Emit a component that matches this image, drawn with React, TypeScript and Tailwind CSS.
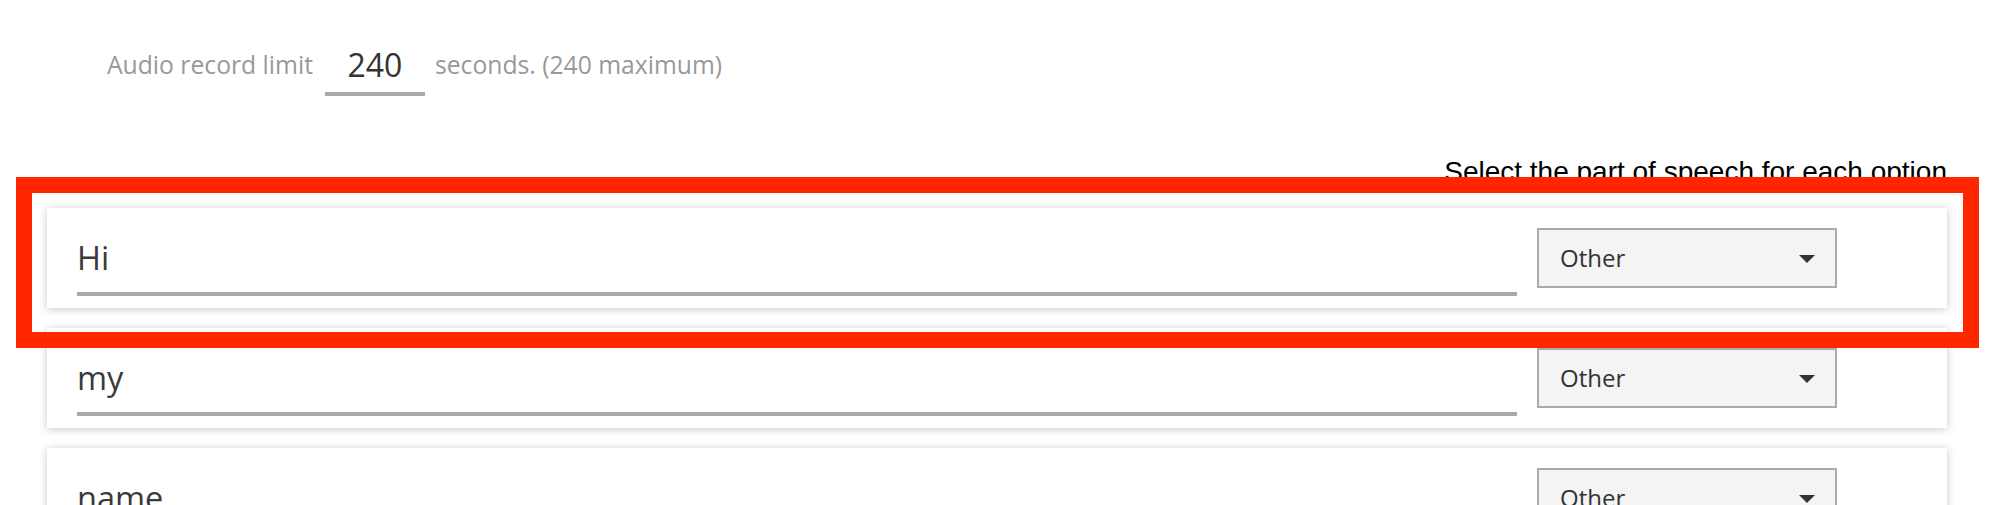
import React from "react";

const words = ["Hi", "my", "name"];

const PartOfSpeechRow = ({ word }: { word: string }) => {
    return (
        <div className="flex items-start h-[100px] bg-white pl-[30px] pr-[110px] pt-[20px] shadow-[0_1px_8px_rgba(0,0,0,0.22)]">
            {/* word input */}
            <div className="flex-1 mt-[8px]">
                <input
                    type="text"
                    defaultValue={word}
                    className="w-full h-[60px] pb-[13px] border-b-4 border-[#aaaaaa] bg-transparent text-[32.5px] text-[#3a3a3a] outline-none"
                />
            </div>

            {/* part of speech dropdown */}
            <div className="ml-[20px] w-[300px] h-[60px] flex items-center justify-between pl-[21px] pr-[20px] border-2 border-[#aaaaaa] bg-[#f4f4f4]">
                <span className="text-[24px] leading-[32px] text-[#333333]">Other</span>
                <svg width="16" height="8" viewBox="0 0 16 8" className="mt-[1px]">
                    <path d="M0 0 L16 0 L8 8 Z" fill="#333333" />
                </svg>
            </div>
        </div>
    );
};

export default function App() {
    return (
        <div className="relative w-[1990px] h-[505px] overflow-hidden bg-white font-['Open_Sans',sans-serif]">
            {/* Audio limit */}
            <div className="flex items-start pl-[107px] pt-[44px]">
                <span className="mt-[5px] text-[24.7px] leading-[32px] text-[#999999]">Audio record limit</span>
                <input
                    type="text"
                    defaultValue="240"
                    className="ml-[12px] w-[100px] h-[52px] pb-[8px] border-b-4 border-[#aaaaaa] bg-transparent text-center text-[32px] text-[#333333] outline-none"
                />
                <span className="ml-[10px] mt-[5px] text-[24.7px] leading-[32px] text-[#999999]">
                    seconds. (240 maximum)
                </span>
            </div>

            {/* Options */}
            <div className="ml-[47px] w-[1900px]">
                <div className="mt-[60px] text-right font-['Liberation_Sans',Arial,sans-serif] text-[28px] leading-[32px] text-black">
                    Select the part of speech for each option
                </div>
                <div className="mt-[20px] flex flex-col gap-5">
                    {words.map((w) => (
                        <PartOfSpeechRow key={w} word={w} />
                    ))}
                </div>
            </div>

            {/* highlight annotation */}
            <div className="absolute left-[16px] top-[177px] w-[1963px] h-[171px] border-[16px] border-[#ff2600] pointer-events-none" />
        </div>
    );
}
